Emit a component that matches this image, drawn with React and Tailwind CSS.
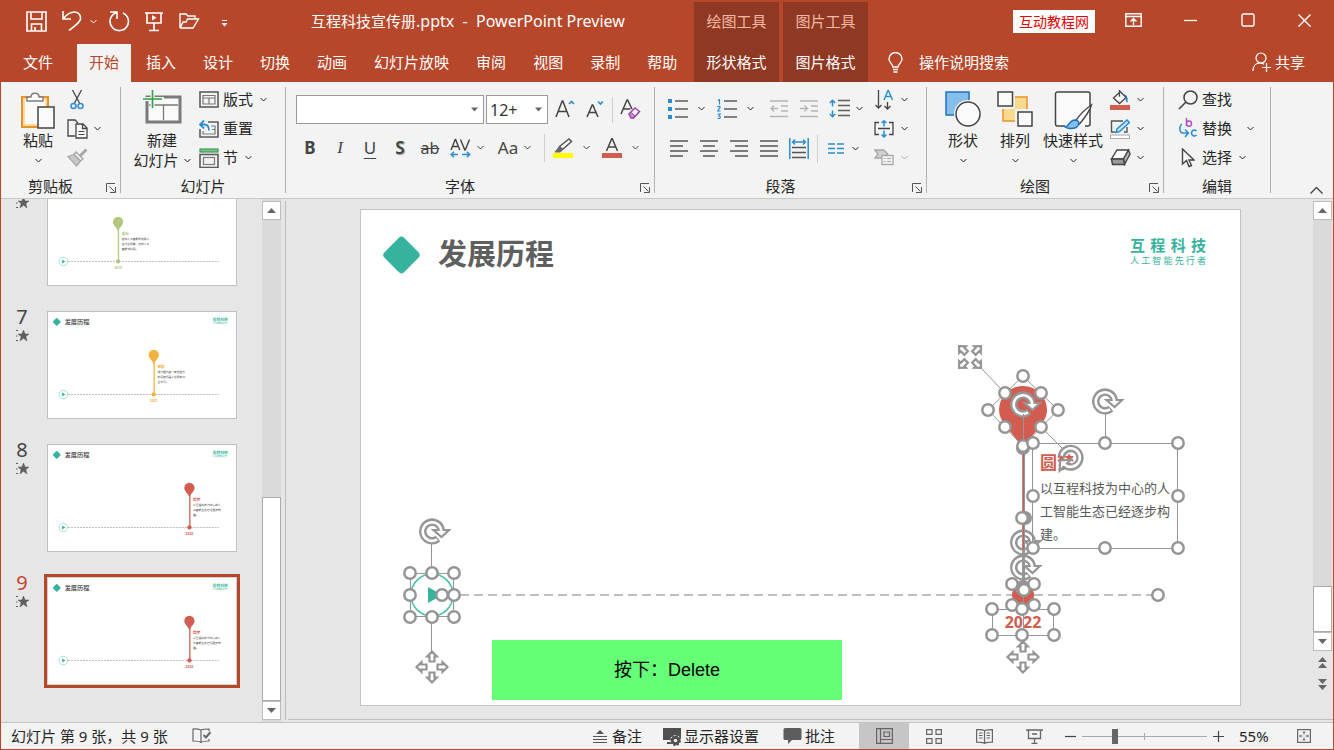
const RED = '#d15c4f';
const GREY = '#959595';
const TEAL = '#36b39e';

function Svg({ w, h, children }) {
  return (
    <svg width={w} height={h} viewBox={`0 0 ${w} ${h}`} fill="none" stroke="currentColor" className="shrink-0" aria-hidden="true">
      {children}
    </svg>
  );
}

const Chevron = () => (
  <Svg w={7} h={5}>
    <path d="M.5 1l3 3 3-3" strokeWidth="1" />
  </Svg>
);

const Launcher = () => (
  <Svg w={10} h={10}>
    <path d="M.5 9V.5H9M3.5 3.5l5 5M9.5 4v5.5H4" stroke="#555" />
  </Svg>
);

/* ---------- title bar ---------- */

const quickAccess = [
  {
    label: '保存',
    className: 'ml-[25px]',
    icon: (
      <Svg w={21} h={21}>
        <path d="M1 1h19v19H1zM5 1v7h11V1M5.500 20v-7h10v7M9 20v-4" strokeWidth="1.6" />
      </Svg>
    ),
  },
  {
    label: '撤消',
    className: 'ml-[15px]',
    icon: (
      <Svg w={20} h={22}>
        <path d="M1 1v8h8M1.500 8.500C5 4 9 2 12.500 2 17 2 19 5.500 18.500 9 17.500 13.500 12 16 7 20.500" strokeWidth="1.6" />
      </Svg>
    ),
  },
  { label: '撤消选项', className: 'ml-2', icon: <Chevron /> },
  {
    label: '重复',
    className: 'ml-3',
    icon: (
      <Svg w={21} h={22}>
        <path d="M1 2h7v7M14 3a9.200 9.200 0 1 1-7.500 0L8 2" strokeWidth="1.6" />
      </Svg>
    ),
  },
  {
    label: '从头开始',
    className: 'ml-3.5',
    icon: (
      <Svg w={20} h={21}>
        <path d="M1 2h18M3 2v10h14V2M10 12v7M5 19.500h10" strokeWidth="1.6" />
        <path d="M8 4v5.500l4.500-2.700z" fill="currentColor" stroke="none" />
      </Svg>
    ),
  },
  {
    label: '打开',
    className: 'ml-[15px]',
    icon: (
      <Svg w={21} h={16}>
        <path d="M1 15V1h6l2 2h7v3M1 15h13l5.500-9H8.500L7 9H4L1 15" strokeWidth="1.4" />
      </Svg>
    ),
  },
  {
    label: '自定义快速访问工具栏',
    className: 'ml-[21px] pt-1',
    icon: (
      <Svg w={7} h={7}>
        <path d="M1 .5h5" />
        <path d="M.5 3h6l-3 3.500z" fill="currentColor" stroke="none" />
      </Svg>
    ),
  },
];

const windowButtons = [
  {
    label: '功能区显示选项',
    icon: (
      <Svg w={17} h={14}>
        <path d="M.8.8h15.400v12.400H.8zM1 3.500h15M8.500 12V6M5.500 8.500l3-3 3 3" strokeWidth="1.4" />
      </Svg>
    ),
  },
  { label: '最小化', icon: <Svg w={13} h={3}><path d="M0 1.500h13" strokeWidth="1.3" /></Svg> },
  { label: '最大化', icon: <Svg w={14} h={14}><rect x="1" y="1" width="12" height="12" rx="1.500" strokeWidth="1.4" /></Svg> },
  { label: '关闭', icon: <Svg w={13} h={13}><path d="M.5.5l12 12M12.500.5l-12 12" strokeWidth="1.4" /></Svg> },
];

const tabs = ['开始', '插入', '设计', '切换', '动画', '幻灯片放映', '审阅', '视图', '录制', '帮助'];

function ContextTab({ tool, tab }) {
  return (
    <div className="mt-0.5 flex w-[85px] flex-col justify-between bg-[#8f3823]">
      <div className="flex h-[38px] items-center justify-center text-[#f5b9a3]">{tool}</div>
      <button className="flex h-10 items-center justify-center">{tab}</button>
    </div>
  );
}

function Header() {
  return (
    <header className="flex h-[82px] shrink-0 bg-[#b7472a] text-[15px] leading-5 text-white">
      <div className="flex w-[693px] flex-col justify-between">
        <div className="flex h-[42px] items-center">
          {quickAccess.map((q) => (
            <button key={q.label} aria-label={q.label} className={q.className}>
              {q.icon}
            </button>
          ))}
          <h1 className="ml-[83px] whitespace-pre">
            互程科技宣传册<span className="text-[16px]">.pptx{'  -  '}PowerPoint Preview</span>
          </h1>
        </div>
        <nav className="flex h-[38px] gap-[3px] pl-[10px]">
          <button className="mr-[9px] px-3 pb-0.5">文件</button>
          {tabs.map((t, i) => (
            <button key={t} className={i === 0 ? 'bg-[#f3f3f3] px-3 pb-0.5 text-[#b7472a]' : 'px-3 pb-0.5'}>
              {t}
            </button>
          ))}
        </nav>
      </div>
      <ContextTab tool="绘图工具" tab="形状格式" />
      <div className="w-1" />
      <ContextTab tool="图片工具" tab="图片格式" />
      <div className="flex flex-1 flex-col justify-between">
        <div className="flex h-[42px] items-center justify-end">
          <span className="mr-[10px] bg-white px-[6px] text-[14px] leading-[23px] text-[#e60000]">互动教程网</span>
          {windowButtons.map((b) => (
            <button key={b.label} aria-label={b.label} className="flex h-10 w-[57px] items-center justify-center pb-0.5">
              {b.icon}
            </button>
          ))}
        </div>
        <div className="flex h-[38px] items-center justify-between pb-0.5 pl-5 pr-7">
          <button className="flex items-center gap-4">
            <Svg w={15} h={21}>
              <path d="M5 15c0-3-4-4-4-8a6.500 6.500 0 0 1 13 0c0 4-4 5-4 8zM5 17.500h5M5.500 20h4" strokeWidth="1.4" />
            </Svg>
            操作说明搜索
          </button>
          <button className="flex items-center gap-1">
            <Svg w={19} h={20}>
              <circle cx="9" cy="6" r="5" strokeWidth="1.2" />
              <path d="M1 19c0-5 3-8 7-8 2 0 3 .5 4 1.200M14.500 11v9M10 15.500h9" strokeWidth="1.2" />
            </Svg>
            共享
          </button>
        </div>
      </div>
    </header>
  );
}

/* ---------- ribbon ---------- */

function Group({ title, launcher, className, children }) {
  return (
    <>
      <section className={`flex flex-col ${className}`}>
        <div className="flex h-[94px]">{children}</div>
        <div className="flex h-[22px] items-center pb-0.5">
          <span className="flex-1 text-center">{title}</span>
          {launcher && (
            <button aria-label={`${title}设置`} className="flex w-5 pl-[6px] pt-1">
              <Launcher />
            </button>
          )}
        </div>
      </section>
      <div className="my-[5px] w-px bg-[#b0b0b0]" />
    </>
  );
}

function BigButton({ icon, label, second, className }) {
  return (
    <button className={`flex flex-col items-center pt-2 ${className}`}>
      <span className="flex h-10 items-start">{icon}</span>
      <span className="h-5 whitespace-nowrap">{label}</span>
      <span className="flex h-5 items-center gap-[5px] whitespace-nowrap">
        {second}
        <Chevron />
      </span>
    </button>
  );
}

function SmallButton({ icon, label, arrow, name, far }) {
  return (
    <button aria-label={name} className="flex h-[29px] items-center gap-1">
      <span className="flex w-5 justify-center">{icon}</span>
      {label && <span className="pb-0.5">{label}</span>}
      {arrow && <span className={far ? 'pl-[11px]' : 'pl-[3px]'}><Chevron /></span>}
    </button>
  );
}

function SplitButton({ icon, name, className = 'w-[49px] gap-2' }) {
  return (
    <button aria-label={name} className={`flex h-[29px] items-center ${className}`}>
      <span className="flex w-6 shrink-0 justify-center">{icon}</span>
      <Chevron />
    </button>
  );
}

const PasteIcon = () => (
  <Svg w={36} h={40}>
    <path d="M2 7h26v30H2z" fill="#fafafa" stroke="#e8912d" strokeWidth="2" />
    <path d="M4 9h22v26H4z" stroke="#fbdc9b" strokeWidth="2" />
    <path d="M7 11V7h4c0-5 8-5 8 0h4v4z" fill="#fff" stroke="#7d7d7d" strokeWidth="1.4" />
    <rect x="18" y="17" width="16" height="21" fill="#fafafa" stroke="#444" strokeWidth="1.500" />
  </Svg>
);

const CutIcon = () => (
  <Svg w={14} h={20}>
    <path d="M2.500 0l7 13M11.500 0l-7 13" stroke="#444" strokeWidth="1.300" />
    <circle cx="3.500" cy="16" r="2.500" stroke="#2a8dd4" strokeWidth="1.500" />
    <circle cx="10.500" cy="16" r="2.500" stroke="#2a8dd4" strokeWidth="1.500" />
  </Svg>
);

const CopyIcon = () => (
  <Svg w={21} h={20}>
    <path d="M8 17H1V1h7l3 3" stroke="#444" strokeWidth="1.300" />
    <path d="M9 5h7l4 4v10H9zM15.500 5v4.500H20" fill="#fafafa" stroke="#444" strokeWidth="1.300" />
    <path d="M11.500 12.500h6M11.500 15.500h6" stroke="#444" />
  </Svg>
);

const BrushIcon = () => (
  <Svg w={20} h={19}>
    <path d="M19.500 1.500L13 8" stroke="#a6a6a6" strokeWidth="3" />
    <path d="M9 4l7 7-2.500 2L7 6.500z" fill="#f3f3f3" stroke="#a6a6a6" strokeWidth="1.300" />
    <path d="M7 6.500L1 8.500l8.500 9.500 4-5z" fill="#c8c8c8" stroke="#a6a6a6" strokeWidth="1.300" />
  </Svg>
);

const NewSlideIcon = () => (
  <Svg w={40} h={36}>
    <rect x="5" y="7" width="33" height="25" fill="#fafafa" stroke="#7a7a7a" strokeWidth="3" />
    <path d="M7 15h29M21.500 15v15" stroke="#7a7a7a" strokeWidth="1.300" />
    <path d="M0 9h22M10.500 0v20" stroke="#f3f3f3" strokeWidth="4" />
    <path d="M1 9h19M10.500 0v18" stroke="#2fa34a" strokeWidth="1.600" />
  </Svg>
);

const LayoutIcon = () => (
  <Svg w={20} h={17}>
    <rect x="1" y="1" width="18" height="15" stroke="#5d5d5d" strokeWidth="1.600" />
    <path d="M4 4.500h12v8.500H4zM4 7h12M10 7v6" stroke="#7a7a7a" strokeWidth="1.200" />
  </Svg>
);

const ResetIcon = () => (
  <Svg w={20} h={18}>
    <path d="M9 2h10v15H1V9" stroke="#5d5d5d" strokeWidth="1.600" />
    <path d="M12 6h4v8H4v-3M13 9.500h3" stroke="#7a7a7a" strokeWidth="1.200" />
    <path d="M5 .5L1 4.500l4 4M1.500 4.500H5c3 0 5 2 5 6" stroke="#2a8dd4" strokeWidth="1.800" />
  </Svg>
);

const SectionIcon = () => (
  <Svg w={20} h={20}>
    <rect x="1" y="1" width="18" height="3" fill="#7fc08f" stroke="#3f9a57" strokeWidth="1.200" />
    <rect x="1" y="6.500" width="18" height="13" stroke="#5d5d5d" strokeWidth="1.600" />
    <rect x="4.500" y="9.500" width="11" height="7" stroke="#7a7a7a" strokeWidth="1.200" />
  </Svg>
);

const GrowIcon = ({ small }) => (
  <Svg w={20} h={20}>
    {small ? (
      <path d="M1 17L6.200 5h.6L12 17M3 12.500h7" stroke="#444" strokeWidth="1.500" />
    ) : (
      <path d="M1 17L7.200 1h.6L14 17M3.500 11.500h8.500" stroke="#444" strokeWidth="1.500" />
    )}
    <path d={small ? 'M12 1.500l2.500 2.500L17 1.500' : 'M14 4l2.500-2.500L19 4'} stroke="#2a8dd4" strokeWidth="1.600" />
  </Svg>
);

const ClearIcon = () => (
  <Svg w={21} h={21}>
    <path d="M1 15L7 1h.6L12 10M3.500 10h7" stroke="#444" strokeWidth="1.500" />
    <path d="M9 15l6-6 4.500 3.500-6 6.500H11z" fill="#fff" stroke="#9b3fa8" strokeWidth="1.500" />
    <path d="M9 15l2-1.500L15 17l-1.500 2H11z" fill="#c58fce" stroke="#9b3fa8" />
  </Svg>
);

const SpacingIcon = () => (
  <Svg w={21} h={20}>
    <path d="M1 12L5.200 1.500h.4L9.800 12M2.600 8.500h5.600M10.500 1.500L14.800 12h.4L19.500 1.500" stroke="#444" strokeWidth="1.400" />
    <path d="M1 16.500h7M12 16.500h7.500M4 13.800l-3 2.700 3 2.700M16.800 13.800l3 2.700-3 2.700" stroke="#2a8dd4" strokeWidth="1.400" />
  </Svg>
);

const HighlightIcon = () => (
  <Svg w={20} h={20}>
    <path d="M16 1l2.500 2.500L9.500 11.500 6.500 8.500z" fill="#fafafa" stroke="#555" strokeWidth="1.500" />
    <path d="M6.500 8.500l3 3-2 2.500H2z" fill="#666" stroke="#666" />
    <rect y="15" width="20" height="5" fill="#ffff00" stroke="none" />
  </Svg>
);

const FontColorIcon = () => (
  <Svg w={20} h={20}>
    <path d="M4.500 13L9.700.8h.6L15.500 13M6.300 9h7.400" stroke="#444" strokeWidth="1.500" />
    <rect y="15" width="20" height="5" fill={RED} stroke="none" />
  </Svg>
);

const BulletsIcon = () => (
  <Svg w={20} h={20}>
    <path d="M0 2h4M0 10h4M0 18h4" stroke="#2a8dd4" strokeWidth="4" />
    <path d="M7 2h13M7 10h13M7 18h13" stroke="#5d5d5d" strokeWidth="1.500" />
  </Svg>
);

const NumberingIcon = () => (
  <Svg w={20} h={20}>
    <path d="M1 1.500L2.500.5v5M.5 8c1-1.200 3-.6 2.500.7L.5 12h3M.5 15h2.800l-1.500 2c2 0 2 2.500-.2 2.500H.5" stroke="#2a8dd4" strokeWidth="1.200" />
    <path d="M7 2h13M7 10h13M7 18h13" stroke="#5d5d5d" strokeWidth="1.500" />
  </Svg>
);

const IndentIcon = ({ more }) => (
  <Svg w={18} h={18}>
    <path d="M0 1h18M11 6h7M11 11h7M0 16.500h18" stroke="#b5b5b5" strokeWidth="1.600" />
    <path d={more ? 'M0 8.500h7M4.500 5.500l3 3-3 3' : 'M1 8.500h7M4 5.500l-3 3 3 3'} stroke="#b5b5b5" strokeWidth="1.300" />
  </Svg>
);

const LineSpacingIcon = () => (
  <Svg w={21} h={19}>
    <path d="M3.500 1.500v6M3.500 11.500v6M.8 4l2.700-2.700L6.200 4M.8 15l2.700 2.700L6.200 15" stroke="#2a8dd4" strokeWidth="1.500" />
    <path d="M9 1.500h12M9 6.500h12M9 11.500h12M9 16.500h12" stroke="#5d5d5d" strokeWidth="1.500" />
  </Svg>
);

const alignPaths = {
  左对齐: 'M0 1h18M0 6h13M0 11h18M0 16h13',
  居中: 'M0 1h18M3 6h12M0 11h18M3 16h12',
  右对齐: 'M0 1h18M5 6h13M0 11h18M5 16h13',
  两端对齐: 'M0 1h18M0 6h18M0 11h18M0 16h18',
};

const AlignIcon = ({ d }) => (
  <Svg w={18} h={17}>
    <path d={d} stroke="#555" strokeWidth="1.500" />
  </Svg>
);

const DistributeIcon = () => (
  <Svg w={20} h={21}>
    <path d="M.8 0v21M19.200 0v21" stroke="#2a8dd4" strokeWidth="1.500" />
    <path d="M3.500 4h13M6 1.500L3.500 4 6 6.500M14 1.500L16.500 4 14 6.500" stroke="#2a8dd4" strokeWidth="1.400" />
    <path d="M3 9.500h14M3 14.500h14M3 19.500h14" stroke="#555" strokeWidth="1.500" />
  </Svg>
);

const ColumnsIcon = () => (
  <Svg w={16} h={11}>
    <path d="M0 1h7M9 1h7M0 5.500h7M9 5.500h7M0 10h7M9 10h7" stroke="#2a8dd4" strokeWidth="1.400" />
  </Svg>
);

const DirectionIcon = () => (
  <Svg w={19} h={20}>
    <path d="M3.500 0v18M.5 15l3 3 3-3M12.500 12v7M9.500 16l3 3 3-3" stroke="#444" strokeWidth="1.300" />
    <path d="M9 10l4-9.500h.4L17.500 10M10.500 6.500H16" stroke="#2a8dd4" strokeWidth="1.400" />
  </Svg>
);

const AlignTextIcon = () => (
  <Svg w={20} h={18}>
    <path d="M5 2.500H1v12h4M15 2.500h4v12h-4M4 8.500h12" stroke="#444" strokeWidth="1.300" />
    <path d="M10 .5v6M10 10.500v6M7.500 3L10 .8 12.500 3M7.500 14.500L10 17l2.500-2.500" stroke="#2a8dd4" strokeWidth="1.500" />
  </Svg>
);

const SmartArtIcon = () => (
  <Svg w={20} h={17}>
    <path d="M.8 1h9l4 4-4 4H1l3-4z" fill="#d0d0d0" stroke="#a6a6a6" strokeWidth="1.300" />
    <rect x="8" y="6.500" width="11" height="9" fill="#f3f3f3" stroke="#a6a6a6" strokeWidth="1.300" />
    <path d="M10 9.500h1.500M13 9.500h4M10 12.500h1.500M13 12.500h4" stroke="#a6a6a6" />
  </Svg>
);

const ShapesIcon = () => (
  <Svg w={36} h={38}>
    <rect x="1" y="2" width="23" height="23" fill="#83beec" stroke="#1e73be" strokeWidth="1.500" />
    <circle cx="23" cy="24" r="14" fill="#f3f3f3" stroke="none" />
    <circle cx="23" cy="24" r="12" fill="#fafafa" stroke="#444" strokeWidth="1.500" />
  </Svg>
);

const ArrangeIcon = () => (
  <Svg w={36} h={38}>
    <rect x="6" y="7" width="24" height="24" fill="#f8da8c" stroke="#e8912d" strokeWidth="1.500" />
    <path d="M-1 0h19v19H-1zM18 19h19v20H18z" fill="#f3f3f3" stroke="none" />
    <path d="M1 2h14.500v14H1zM21 22h14v14H21z" fill="#fafafa" stroke="#444" strokeWidth="1.500" />
  </Svg>
);

const QuickStyleIcon = () => (
  <Svg w={40} h={40}>
    <path d="M12 36H4.500a2 2 0 0 1-2-2V4a2 2 0 0 1 2-2H35a2 2 0 0 1 2 2v30a2 2 0 0 1-2 2h-3" fill="#fafafa" stroke="#444" strokeWidth="1.500" />
    <path d="M38.500 15c-6 4-12 10-16 16l4 3c5-6 10-12 12-19z" fill="#fff" stroke="#444" strokeWidth="1.400" />
    <path d="M12 37c4 0 4-7 10-7 6 1 4 6 1 7.500-3 1.500-8 1.500-11-.5z" fill="#83beec" stroke="#1e73be" strokeWidth="1.500" />
  </Svg>
);

const FillIcon = () => (
  <Svg w={20} h={20}>
    <path d="M9.500 2.500L3.500 8l6 5.500L16 7.500 9.500.8v6" fill="#fafafa" stroke="#444" strokeWidth="1.300" />
    <path d="M13.500 4.500c3 0 4.500 2 4 8-1 0-1.500-1-2-5z" fill="#1e73be" stroke="none" />
    <rect y="15" width="20" height="5" fill={RED} stroke="none" />
  </Svg>
);

const OutlineIcon = () => (
  <Svg w={20} h={20}>
    <path d="M13 2H1.500v11H5M17 8v5h-3" stroke="#555" strokeWidth="1.400" />
    <path d="M17 1l2.500 2.500L9.500 12.500 6 13.500l1-3.500z" fill="#cfe6f8" stroke="#2a8dd4" strokeWidth="1.500" />
    <rect x=".5" y="16" width="19" height="3.500" fill="#fff" stroke="#aaa" />
  </Svg>
);

const EffectsIcon = () => (
  <Svg w={21} h={17}>
    <path d="M7 1h11.500l-5 9H1.500z" fill="#fafafa" stroke="#444" strokeWidth="1.400" />
    <path d="M18.500 1L20 5l-5.500 10.500L13.500 10z" fill="#bbb" stroke="#444" strokeWidth="1.400" />
    <path d="M1.500 10l1 5.500h12L13.500 10z" fill="#999" stroke="#444" strokeWidth="1.400" />
  </Svg>
);

const FindIcon = () => (
  <Svg w={20} h={20}>
    <circle cx="12.500" cy="7.500" r="6.500" stroke="#444" strokeWidth="1.500" />
    <path d="M8 12l-7 7" stroke="#444" strokeWidth="1.600" />
  </Svg>
);

const ReplaceIcon = () => (
  <Svg w={20} h={21}>
    <path d="M8.500 0v8M8.500 5.500c0-3.500 5-3.500 5 0s-5 3.500-5 0" stroke="#b04fc0" strokeWidth="1.500" />
    <path d="M18.500 13c-2-2-5-.8-5 2s3 4 5 2" stroke="#2a8dd4" strokeWidth="1.600" />
    <path d="M4 6c-3 2-3 9 1 9h5M7 11.500l3.500 3.500L7 19" stroke="#2a8dd4" strokeWidth="1.500" />
  </Svg>
);

const SelectIcon = () => (
  <Svg w={14} h={20}>
    <path d="M1.500 1v15l4-3.500 2.500 6 2.500-1-2.500-5.500h5z" fill="#fafafa" stroke="#444" strokeWidth="1.400" />
  </Svg>
);

function Combo({ label, value, className }) {
  return (
    <div className={`relative h-[29px] ${className}`}>
      <select aria-label={label} className="h-full w-full appearance-none border border-[#9b9b9b] bg-white pl-[3px] text-[16px] text-[#333]">
        <option>{value}</option>
      </select>
      <span className="pointer-events-none absolute right-1.5 top-3 text-[#666]">
        <Svg w={7} h={5}>
          <path d="M0 .5h7L3.500 4.500z" fill="currentColor" stroke="none" />
        </Svg>
      </span>
    </div>
  );
}

function Ribbon() {
  return (
    <div className="flex h-[117px] shrink-0 border-b border-[#c8c8c8] bg-[#f3f3f3] text-[15px] leading-5 text-[#262626]">
      <Group title="剪贴板" launcher className="w-[119px]">
        <BigButton className="ml-[17px] w-10" icon={<PasteIcon />} label="粘贴" />
        <div className="ml-[9px] flex flex-col pt-[3px]">
          <SmallButton name="剪切" icon={<CutIcon />} />
          <SmallButton name="复制" icon={<CopyIcon />} arrow />
          <SmallButton name="格式刷" icon={<BrushIcon />} />
        </div>
      </Group>

      <Group title="幻灯片" className="w-[164px]">
        <BigButton className="ml-2.5 w-[62px]" icon={<NewSlideIcon />} label="新建" second="幻灯片" />
        <div className="ml-1.5 flex flex-col pt-[3px]">
          <SmallButton icon={<LayoutIcon />} label="版式" arrow />
          <SmallButton icon={<ResetIcon />} label="重置" />
          <SmallButton icon={<SectionIcon />} label="节" arrow />
        </div>
      </Group>

      <Group title="字体" launcher className="w-[368px]">
        <div className="flex flex-1 flex-col gap-[9px] pl-[9px] pt-[13px]">
          <div className="flex items-center pl-px">
            <Combo label="字体名称" value="" className="w-[188px]" />
            <Combo label="字号" value="12+" className="ml-0.5 w-[62px]" />
            <button aria-label="增大字号" className="ml-[7px]"><GrowIcon /></button>
            <button aria-label="减小字号" className="ml-[11px]"><GrowIcon small /></button>
            <div className="ml-[6px] h-[26px] w-px bg-[#cfcfcf]" />
            <button aria-label="清除格式" className="ml-[7px]"><ClearIcon /></button>
          </div>
          <div className="flex h-[29px] items-center text-[17px] text-[#444]">
            <button className="w-[30px] font-bold">B</button>
            <button className="w-[30px] font-['Liberation_Serif',serif] italic">I</button>
            <button className="w-[30px] underline underline-offset-4">U</button>
            <button className="w-[30px] font-semibold [text-shadow:1px_1px_1px_#999]">S</button>
            <button className="w-[30px] text-[16px] line-through">ab</button>
            <div className="w-[3px]" />
            <SplitButton name="字符间距" className="w-12 gap-[5px]" icon={<SpacingIcon />} />
            <SplitButton name="更改大小写" className="w-12 gap-1" icon="Aa" />
            <div className="mr-1.5 h-7 w-px bg-[#cfcfcf]" />
            <SplitButton name="突出显示" icon={<HighlightIcon />} />
            <SplitButton name="字体颜色" icon={<FontColorIcon />} />
          </div>
        </div>
      </Group>

      <Group title="段落" launcher className="w-[271px]">
        <div className="flex flex-col gap-3 pl-[9px] pt-[13px]">
          <div className="flex h-[27px] items-center pl-0.5">
            <SplitButton name="项目符号" icon={<BulletsIcon />} />
            <SplitButton name="编号" icon={<NumberingIcon />} />
            <button aria-label="减少缩进" className="flex w-[30px] justify-center"><IndentIcon /></button>
            <button aria-label="增加缩进" className="flex w-[30px] justify-center"><IndentIcon more /></button>
            <SplitButton name="行距" className="ml-[3px] w-[43px] gap-[5px]" icon={<LineSpacingIcon />} />
          </div>
          <div className="flex h-[29px] items-center">
            {Object.entries(alignPaths).map(([name, d]) => (
              <button key={name} aria-label={name} className="flex w-[30px] justify-center">
                <AlignIcon d={d} />
              </button>
            ))}
            <button aria-label="分散对齐" className="flex w-[30px] justify-center"><DistributeIcon /></button>
            <div className="mx-[3px] h-7 w-px bg-[#cfcfcf]" />
            <SplitButton name="分栏" className="ml-[3px] w-[43px] gap-1" icon={<ColumnsIcon />} />
          </div>
        </div>
        <div className="ml-1 flex flex-col pt-[3px]">
          <SmallButton name="文字方向" icon={<DirectionIcon />} arrow />
          <SmallButton name="对齐文本" icon={<AlignTextIcon />} arrow />
          <div className="text-[#b0b0b0]">
            <SmallButton name="转换为 SmartArt" icon={<SmartArtIcon />} arrow />
          </div>
        </div>
      </Group>

      <Group title="绘图" launcher className="w-[236px]">
        <BigButton className="ml-2.5 w-[52px]" icon={<ShapesIcon />} label="形状" />
        <BigButton className="w-[52px]" icon={<ArrangeIcon />} label="排列" />
        <BigButton className="w-16" icon={<QuickStyleIcon />} label="快速样式" />
        <div className="ml-[5px] flex flex-col pt-[3px]">
          <SmallButton name="形状填充" icon={<FillIcon />} arrow />
          <SmallButton name="形状轮廓" icon={<OutlineIcon />} arrow />
          <SmallButton name="形状效果" icon={<EffectsIcon />} arrow />
        </div>
      </Group>

      <Group title="编辑" className="w-[106px]">
        <div className="ml-3.5 flex flex-col pt-[3px]">
          <SmallButton icon={<FindIcon />} label="查找" />
          <SmallButton icon={<ReplaceIcon />} label="替换" arrow far />
          <SmallButton icon={<SelectIcon />} label="选择" arrow />
        </div>
      </Group>

      <div className="flex flex-1 items-end justify-end pb-1 pr-[10px]">
        <button aria-label="折叠功能区">
          <Svg w={13} h={8}>
            <path d="M.5 7.500l6-6 6 6" stroke="#444" strokeWidth="1.300" />
          </Svg>
        </button>
      </div>
    </div>
  );
}

/* ---------- slide thumbnails ---------- */

// the first slide is scrolled half out of the pane, so its number and heading are left out
const slides = [
  { n: 6, x: 328, color: '#b3c87c', year: '2019', head: '成长', lines: ['启动人工智能研究融入', '各行业场景，迈向人工', '智能新阶段。'], scrolled: true },
  { n: 7, x: 495, color: '#f3b23f', year: '2021', head: '转型', lines: ['成为国内第一家把自己', '的深度机器人应用到行', '业公司。'] },
  { n: 8, x: 662, color: RED, year: '2022', head: '圆梦', lines: ['以互程科技为中心的人', '工智能生态已经逐步构', '建。'] },
  { n: 9, x: 662, color: RED, year: '2022', head: '圆梦', lines: ['以互程科技为中心的人', '工智能生态已经逐步构', '建。'], active: true },
];

function Thumbnail({ slide }) {
  const { x, color } = slide;
  return (
    <svg viewBox="0 0 880 496" className="block h-full w-full">
      {!slide.scrolled && (
        <g>
          <rect x="27" y="32" width="28" height="28" rx="4" fill={TEAL} transform="rotate(45 41 46)" />
          <text x="78" y="56" fontSize="29" fontWeight="700" fill="#5f5f5f">发展历程</text>
          <text x="770" y="43" fontSize="18" fontWeight="700" fill={TEAL}>互程科技</text>
          <text x="770" y="56" fontSize="10" fill={TEAL}>人工智能先行者</text>
        </g>
      )}
      <circle cx="72" cy="386" r="20" fill="none" stroke="#7fd0c1" strokeWidth="3" />
      <path d="M66 377v18l16-9z" fill={TEAL} />
      <path d="M94 386h706" stroke="#bbb" strokeWidth="5" strokeDasharray="9 5" />
      <path d={`M${x - 24} 201a24 24 0 1 1 48 0c0 16-18 24-24 44c-6-20-24-28-24-44z`} fill={color} />
      <path d={`M${x + 2} 230v156`} stroke={color} strokeWidth="6" />
      <circle cx={x} cy="386" r="10" fill={color} />
      <text x={x} y="420" fontSize="16" fontWeight="700" textAnchor="middle" fill={color}>{slide.year}</text>
      <text x={x + 17} y="262" fontSize="17" fontWeight="700" fill={color}>{slide.head}</text>
      {slide.lines.map((l, i) => (
        <text key={l} x={x + 17} y={285 + i * 23} fontSize="13" fill="#444">{l}</text>
      ))}
    </svg>
  );
}

function SlidePanel() {
  return (
    <ol className="flex w-[261px] flex-col justify-end gap-[25px] overflow-hidden pb-[37px]">
      {slides.map((s) => (
        <li key={s.n} className="flex h-[108px] shrink-0">
          <div className="flex w-[46px] flex-col items-center pr-1">
            <span className={`h-3 text-[20px] leading-3 ${s.active ? 'text-[#c8452c]' : 'text-[#444]'}`}>{s.scrolled ? null : s.n}</span>
            <span className="mt-1.5 text-[#5f5f5f]">
              <Svg w={13} h={13}>
                <path d="M7.500 1l1.600 4H13l-3.100 2.500L11 12 7.500 9.300 4 12l1.100-4.500L2 5h3.900z" fill="currentColor" strokeWidth=".5" />
                <path d="M0 1.500h2M0 7h1.500M0 11.500h2" strokeWidth="1.200" />
              </Svg>
            </span>
          </div>
          <button
            aria-label={`幻灯片 ${s.n}`}
            className={`w-[190px] border bg-white ${s.active ? 'border-[#d0d0d0] outline-3 outline-[#b7472a]' : 'border-[#c0c0c0]'}`}
          >
            <Thumbnail slide={s} />
          </button>
        </li>
      ))}
    </ol>
  );
}

function ArrowButton({ down, label }) {
  return (
    <button aria-label={label} className="flex h-[19px] w-full shrink-0 items-center justify-center border border-[#bdbdbd] bg-white">
      <Svg w={9} h={5}>
        <path d={down ? 'M0 0h9L4.500 5z' : 'M0 5h9L4.500 0z'} fill="#666" stroke="none" />
      </Svg>
    </button>
  );
}

/* ---------- slide canvas ---------- */

const Handle = ({ x, y }) => <circle cx={x} cy={y} r="5.700" fill="#fff" stroke={GREY} strokeWidth="2.500" />;

const Rotator = ({ x, y, turn = '' }) => (
  <g transform={`translate(${x} ${y}) ${turn}`}>
    <path d="M6 7.600A9.300 9.300 0 1 1 9.200-1.500" fill="none" stroke={GREY} strokeWidth="7.400" />
    <path d="M1.500-1H17L9.500 6z" fill="#fff" stroke={GREY} strokeWidth="2.200" />
    <path d="M5 8.400A9.300 9.300 0 1 1 9.300.5" fill="none" stroke="#fff" strokeWidth="2.600" />
  </g>
);

const Mover = ({ x, y, turn = 0 }) => (
  <g transform={`translate(${x} ${y}) rotate(${turn})`}>
    {[0, 90, 180, 270].map((a) => (
      <path
        key={a}
        d="M0-15.500L4.800-10.500H2.500V-5.500H-2.500V-10.500H-4.800z"
        transform={`rotate(${a})`}
        fill="#fff"
        stroke={GREY}
        strokeWidth="2.200"
      />
    ))}
  </g>
);

const handles = {
  pin: [[1023, 376], [1005, 393], [1041, 393], [988, 410], [1058, 410], [1005, 427], [1041, 427]],
  text: [[1033, 443], [1105, 443], [1178, 443], [1033, 496], [1178, 496], [1033, 548], [1105, 548], [1178, 548]],
  dot: [[1012, 584], [1034, 584], [1012, 605], [1034, 605], [1024, 590]],
  year: [[992, 609], [1022, 609], [1054, 609], [992, 635], [1022, 635], [1054, 635]],
  start: [[442, 595], [410, 573], [432, 573], [454, 573], [410, 595], [454, 595], [410, 617], [432, 617], [454, 617]],
};

const Handles = ({ of }) => handles[of].map(([x, y]) => <Handle key={`${x}-${y}`} x={x} y={y} />);

function SlideShapes() {
  return (
    <svg viewBox="361 210 879 495" className="absolute inset-0 h-full w-full" aria-hidden="true">
      <rect x="387.500" y="241" width="28" height="28" rx="4" fill={TEAL} transform="rotate(45 401.500 255)" />
      <circle cx="432" cy="595" r="21" fill="none" stroke="#45bfa8" strokeWidth="1.500" />
      <path d="M428 587v16l14-8z" fill={TEAL} />
      <path d="M460 595h692" stroke="#bfbfbf" strokeWidth="2" strokeDasharray="9 5" />
      <path d="M999 410a24 24 0 0 1 48 0c0 15-18 24-24 42c-6-18-24-27-24-42z" fill={RED} />
      <circle cx="1023" cy="595" r="11" fill={RED} />
    </svg>
  );
}

function Selection() {
  return (
    <svg viewBox="361 210 879 495" className="absolute inset-0 h-full w-full" aria-hidden="true">
      <g fill="none" stroke={GREY} strokeWidth="1">
        <path d="M410.500 573.500h43v43h-43zM431.500 542v32M431.500 617v34" />
        <path d="M1023 376l-35 34 35 36 35-36zM981 368l20 21M1045 431l18 18" />
        <path d="M992.500 609.500h61v26h-61z" />
      </g>
      <Handles of="start" />
      <Rotator x={432} y={531} />
      <Mover x={432} y={667} />
      <Handle x={1158} y={595} />

      <Mover x={970} y={357} turn={45} />
      <Handles of="pin" />
      <Rotator x={1071} y={458} turn="rotate(135)" />
      <Rotator x={1023} y={404} />
      <path d="M1023.500 414v32" stroke={GREY} />
      <circle cx="1023" cy="448" r="7" fill={GREY} />

      <Rotator x={1023} y={542} />
      <Rotator x={1023} y={567} />
      <path d="M1023.500 450v140" stroke={GREY} strokeWidth="3" />
      <path d="M1023.500 454v96" stroke={RED} />
      <circle cx="1025" cy="518" r="7" fill={GREY} />
      <Handle x={1023} y={446} />
      <Handle x={1022} y={518} />
      <circle cx="1023" cy="588" r="8" fill={GREY} />
      <path d="M1023.500 590v48" stroke={GREY} />
      <Handles of="dot" />
      <Handles of="year" />
      <path d="M1023.500 615v14" stroke={GREY} />
      <Mover x={1023} y={657} />

      <path d="M1032.500 443.500h145v105h-145zM1105.500 413v30" fill="none" stroke={GREY} />
      <Handles of="text" />
      <Rotator x={1105} y={401} />
    </svg>
  );
}

function Slide() {
  return (
    <article className="relative h-[497px] w-[881px] shrink-0 overflow-hidden border border-[#c3c3c3] bg-white">
      <SlideShapes />
      <h2 className="absolute left-[77px] top-6 text-[29px] font-bold leading-10 text-[#5f5f5f]">发展历程</h2>
      <div className="absolute left-[769px] top-[26px] w-[76px] text-[#36b39e] [text-align-last:justify]">
        <p className="text-[15px] font-bold leading-[18px]">互程科技</p>
        <p className="text-[9px] leading-[14px]">人工智能先行者</p>
      </div>
      <div className="absolute left-[679px] top-[241px] w-[132px]">
        <h3 className="text-[17px] font-bold leading-6 text-[#d15c4f]">圆梦</h3>
        <p className="mt-0.5 text-[13px] leading-[23px] text-[#595959]">以互程科技为中心的人工智能生态已经逐步构建。</p>
      </div>
      <p className="absolute left-[632px] top-[402px] w-[60px] text-center text-[16px] font-bold leading-5 text-[#d15c4f]">2022</p>
      <Selection />
      <div className="absolute left-[131px] top-[430px] flex h-[60px] w-[350px] items-center justify-center bg-[#66ff78] font-['Liberation_Sans','Noto_Sans_CJK_SC',sans-serif] text-[18px] leading-6 text-black">
        按下：Delete
      </div>
    </article>
  );
}

function PageStep({ down, label }) {
  return (
    <button aria-label={label} className="flex h-[22px] items-center justify-center">
      <Svg w={9} h={11}>
        <path d={down ? 'M0 0h9L4.500 5zM0 6h9L4.500 11z' : 'M0 5h9L4.500 0zM0 11h9L4.500 6z'} fill="#666" stroke="none" />
      </Svg>
    </button>
  );
}

function Workspace() {
  return (
    <main className="flex min-h-0 flex-1 bg-[#e6e6e6]">
      <SlidePanel />
      <div className="flex w-[19px] flex-col bg-[#dadada] py-0.5">
        <ArrowButton label="向上滚动缩略图" />
        <div className="flex-1" />
        <div className="h-[204px] border border-[#ababab] bg-white" />
        <ArrowButton down label="向下滚动缩略图" />
      </div>
      <div className="my-0.5 ml-1 mr-0.5 w-px bg-[#bdbdbd]" />
      <div className="mb-0.5 flex min-w-0 flex-1 border-b border-[#bdbdbd]">
        <div className="flex min-w-0 flex-1 items-start justify-center overflow-hidden pt-[10px]">
          <Slide />
        </div>
        <div className="mr-px flex w-[19px] flex-col pb-6 pt-0.5">
          <ArrowButton label="向上滚动" />
          <div className="flex-1 bg-[#dadada]" />
          <div className="h-[46px] border border-[#ababab] bg-white" />
          <ArrowButton down label="向下滚动" />
          <PageStep label="上一张幻灯片" />
          <PageStep down label="下一张幻灯片" />
        </div>
      </div>
    </main>
  );
}

/* ---------- status bar ---------- */

const views = [
  {
    label: '普通视图',
    icon: <Svg w={17} h={16}><path d="M.6.6h15.800v14.800H.6zM4.500.6v15M4.500 11.500h12M8 4h5.500v4.500H8z" strokeWidth="1.200" /></Svg>,
  },
  {
    label: '幻灯片浏览',
    icon: <Svg w={16} h={15}><path d="M.6.600h5.400v4.800H.6zM10 .600h5.400v4.800H10zM.6 9.600h5.400v4.800H.6zM10 9.600h5.400v4.800H10z" strokeWidth="1.200" /></Svg>,
  },
  {
    label: '阅读视图',
    icon: <Svg w={17} h={15}><path d="M8.500 1.500C6 .5 3 .5.600.600v12.500c2.500 0 5.500 0 7.900 1 2.400-1 5.400-1 7.900-1V.6c-2.400 0-5.400 0-7.900.9zM8.500 1v14M3 4h3.500M3 6.500h3.500M3 9h3.500M10.500 4H14M10.500 6.500H14M10.500 9H14" strokeWidth="1.200" /></Svg>,
  },
  {
    label: '幻灯片放映',
    icon: <Svg w={17} h={15}><path d="M0 1h17M2.500 1v8.500h12V1M6 5h5M8.500 9.500v5M5.500 14.300h6" strokeWidth="1.300" /></Svg>,
  },
];

function StatusBar() {
  return (
    <footer className="flex h-[27px] shrink-0 items-center border-t border-[#c3c3c3] bg-[#f3f3f3] text-[15px] leading-5 text-[#262626]">
      <span className="ml-[10px]">幻灯片 第 9 张，共 9 张</span>
      <button aria-label="拼写检查" className="ml-6 text-[#666]">
        <Svg w={19} h={16}>
          <path d="M9 2C6 .8 3 .8 1 1v12c3 0 6 0 8 1.500 2-1.500 4-1.500 8-1.500v-2M9 2v12M9 2c2-1 4-1 8-1v2" strokeWidth="1.200" />
          <path d="M11.500 7l2.500 2.500L18.500 4" strokeWidth="2" />
        </Svg>
      </button>
      <div className="flex-1" />
      <button className="flex items-center gap-[5px]">
        <Svg w={14} h={13}>
          <path d="M3 4h8L7 0z" fill="#555" stroke="none" />
          <path d="M0 6.500h14M0 9.500h14M0 12.500h14" stroke="#555" />
        </Svg>
        备注
      </button>
      <button className="ml-5 flex items-center gap-0.5">
        <Svg w={20} h={19}>
          <path d="M1 1h18v12H1zM5 15h5v2H5z" fill="#505050" stroke="none" />
          <circle cx="13.500" cy="13.500" r="5" fill="#505050" stroke="#f3f3f3" />
          <circle cx="13.500" cy="13.500" r="4.500" stroke="#505050" strokeWidth="2" strokeDasharray="2 1.500" />
          <circle cx="13.500" cy="13.500" r="1.800" fill="#f3f3f3" stroke="none" />
        </Svg>
        显示器设置
      </button>
      <button className="mx-6 flex items-center gap-[3px]">
        <Svg w={19} h={16}>
          <path d="M2 0h15a1.500 1.500 0 0 1 1.500 1.500v9A1.500 1.500 0 0 1 17 12H9l-4 4v-4H2a1.500 1.500 0 0 1-1.500-1.500v-9A1.500 1.500 0 0 1 2 0z" fill="#5d5d5d" stroke="none" />
        </Svg>
        批注
      </button>
      {views.map((v, i) => (
        <button
          key={v.label}
          aria-label={v.label}
          className={`flex h-full w-[50px] items-center justify-center text-[#666] ${i === 0 ? 'bg-[#c6c6c6]' : ''}`}
        >
          {v.icon}
        </button>
      ))}
      <button aria-label="缩小" className="ml-1.5">
        <Svg w={11} h={11}><path d="M0 5.500h11" stroke="#444" strokeWidth="1.200" /></Svg>
      </button>
      <div className="relative ml-1.5 flex h-full w-[125px] items-center">
        <span className="absolute left-[62px] top-[10px] h-[7px] w-px bg-[#a9a9a9]" />
        <input
          type="range"
          aria-label="缩放"
          defaultValue="25"
          className="w-full appearance-none bg-transparent [&::-webkit-slider-runnable-track]:h-px [&::-webkit-slider-runnable-track]:bg-[#a9a9a9] [&::-webkit-slider-thumb]:-mt-[7px] [&::-webkit-slider-thumb]:h-[15px] [&::-webkit-slider-thumb]:w-[6px] [&::-webkit-slider-thumb]:appearance-none [&::-webkit-slider-thumb]:bg-[#666]"
        />
      </div>
      <button aria-label="放大" className="ml-1.5">
        <Svg w={11} h={11}><path d="M0 5.500h11M5.500 0v11" stroke="#444" strokeWidth="1.200" /></Svg>
      </button>
      <span className="ml-[15px] w-[33px]">55%</span>
      <button aria-label="适应窗口" className="ml-[25px] mr-[22px] text-[#666]">
        <Svg w={14} h={14}>
          <rect x=".6" y=".6" width="12.800" height="12.800" strokeWidth="1.200" />
          <path d="M7 2.500v3M7 8.500v3M2.500 7h3M8.500 7h3M5.500 4L7 2.500 8.500 4M5.500 10L7 11.500 8.500 10M4 5.500L2.500 7 4 8.500M10 5.500L11.500 7 10 8.500" strokeWidth=".9" />
        </Svg>
      </button>
    </footer>
  );
}

export default function App() {
  return (
    <div className="flex h-screen flex-col overflow-hidden border-x border-b border-[#b7472a] bg-[#e6e6e6] font-['Noto_Sans','Noto_Sans_CJK_SC',sans-serif]">
      <Header />
      <Ribbon />
      <Workspace />
      <StatusBar />
    </div>
  );
}
